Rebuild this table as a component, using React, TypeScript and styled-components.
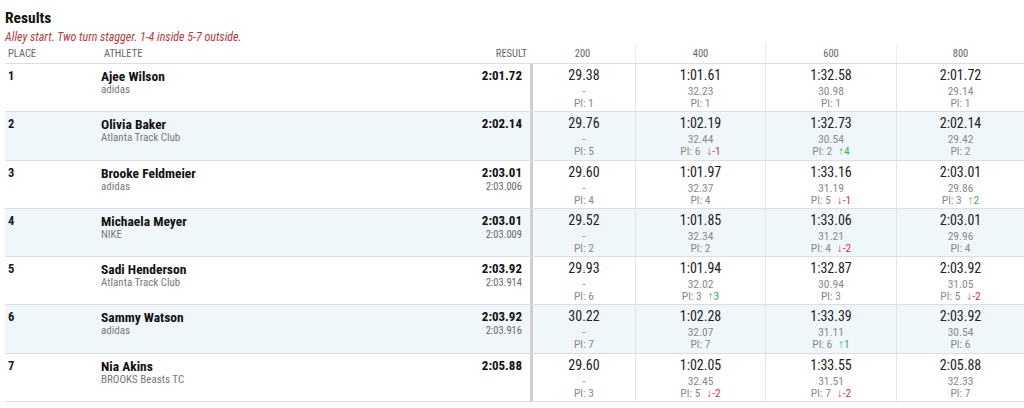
import React from "react";
import styled, { createGlobalStyle } from "styled-components";

type Change = { dir: "up" | "down"; value: number };

interface Split {
  time: string;
  lap: string;
  place: number;
  change?: Change;
}

interface Athlete {
  place: number;
  name: string;
  team: string;
  result: string;
  precise?: string;
  splits: Split[];
}

const SPLIT_LABELS = ["200", "400", "600", "800"];

const up = (value: number): Change => ({ dir: "up", value });
const down = (value: number): Change => ({ dir: "down", value });

const RESULTS: Athlete[] = [
  {
    place: 1,
    name: "Ajee Wilson",
    team: "adidas",
    result: "2:01.72",
    splits: [
      { time: "29.38", lap: "-", place: 1 },
      { time: "1:01.61", lap: "32.23", place: 1 },
      { time: "1:32.58", lap: "30.98", place: 1 },
      { time: "2:01.72", lap: "29.14", place: 1 },
    ],
  },
  {
    place: 2,
    name: "Olivia Baker",
    team: "Atlanta Track Club",
    result: "2:02.14",
    splits: [
      { time: "29.76", lap: "-", place: 5 },
      { time: "1:02.19", lap: "32.44", place: 6, change: down(1) },
      { time: "1:32.73", lap: "30.54", place: 2, change: up(4) },
      { time: "2:02.14", lap: "29.42", place: 2 },
    ],
  },
  {
    place: 3,
    name: "Brooke Feldmeier",
    team: "adidas",
    result: "2:03.01",
    precise: "2:03.006",
    splits: [
      { time: "29.60", lap: "-", place: 4 },
      { time: "1:01.97", lap: "32.37", place: 4 },
      { time: "1:33.16", lap: "31.19", place: 5, change: down(1) },
      { time: "2:03.01", lap: "29.86", place: 3, change: up(2) },
    ],
  },
  {
    place: 4,
    name: "Michaela Meyer",
    team: "NIKE",
    result: "2:03.01",
    precise: "2:03.009",
    splits: [
      { time: "29.52", lap: "-", place: 2 },
      { time: "1:01.85", lap: "32.34", place: 2 },
      { time: "1:33.06", lap: "31.21", place: 4, change: down(2) },
      { time: "2:03.01", lap: "29.96", place: 4 },
    ],
  },
  {
    place: 5,
    name: "Sadi Henderson",
    team: "Atlanta Track Club",
    result: "2:03.92",
    precise: "2:03.914",
    splits: [
      { time: "29.93", lap: "-", place: 6 },
      { time: "1:01.94", lap: "32.02", place: 3, change: up(3) },
      { time: "1:32.87", lap: "30.94", place: 3 },
      { time: "2:03.92", lap: "31.05", place: 5, change: down(2) },
    ],
  },
  {
    place: 6,
    name: "Sammy Watson",
    team: "adidas",
    result: "2:03.92",
    precise: "2:03.916",
    splits: [
      { time: "30.22", lap: "-", place: 7 },
      { time: "1:02.28", lap: "32.07", place: 7 },
      { time: "1:33.39", lap: "31.11", place: 6, change: up(1) },
      { time: "2:03.92", lap: "30.54", place: 6 },
    ],
  },
  {
    place: 7,
    name: "Nia Akins",
    team: "BROOKS Beasts TC",
    result: "2:05.88",
    splits: [
      { time: "29.60", lap: "-", place: 3 },
      { time: "1:02.05", lap: "32.45", place: 5, change: down(2) },
      { time: "1:33.55", lap: "31.51", place: 7, change: down(2) },
      { time: "2:05.88", lap: "32.33", place: 7 },
    ],
  },
];

const COLUMNS = "96px 1fr 97px 105px 130px 131px 128px";

const GlobalStyle = createGlobalStyle`
  html, body {
    margin: 0;
    padding: 0;
    background: #fff;
  }
  body {
    font-family: "Roboto Condensed", Roboto, "Liberation Sans", sans-serif;
    color: #1a1a1a;
  }
`;

const Page = styled.div`
  padding: 9px 0 0 5px;
`;

const Title = styled.h2`
  margin: 0;
  font-size: 15.5px;
  line-height: 19px;
  font-weight: 700;
  color: #111;
`;

const Note = styled.div`
  margin-top: 2px;
  font-size: 12px;
  line-height: 14px;
  font-style: italic;
  color: #b83a3c;
`;

const Table = styled.div`
  display: flex;
  flex-direction: column;
`;

const HeadRow = styled.div`
  display: grid;
  grid-template-columns: ${COLUMNS};
  border-bottom: 1px solid #dedede;
`;

const HeadCell = styled.div<{ $align?: "left" | "center" | "right"; $divider?: boolean }>`
  padding: 4px 3px 3px;
  font-size: 10.5px;
  line-height: 12px;
  text-transform: uppercase;
  color: #666;
  text-align: ${({ $align }) => $align ?? "left"};
  border-left: ${({ $divider }) => ($divider ? "1px solid #ececec" : "none")};
`;

const Row = styled.div<{ $shaded: boolean }>`
  display: grid;
  grid-template-columns: ${COLUMNS};
  height: 48.3px;
  box-sizing: border-box;
  border-bottom: 1px solid #dedede;
  background: ${({ $shaded }) => ($shaded ? "#f0f7fb" : "#fff")};
`;

const Place = styled.div`
  padding: 5px 3px 0;
  font-size: 12.5px;
  line-height: 14px;
  font-weight: 700;
`;

const AthleteCell = styled.div`
  padding-top: 5px;
  display: flex;
  flex-direction: column;
`;

const Name = styled.div`
  font-size: 13.5px;
  line-height: 14px;
  font-weight: 700;
  color: #111;
`;

const Team = styled.div`
  font-size: 11px;
  line-height: 13px;
  color: #777;
`;

const ResultCell = styled.div`
  padding: 5px 8px 0 0;
  display: flex;
  flex-direction: column;
  align-items: flex-end;
`;

const Mark = styled.div`
  font-size: 13px;
  line-height: 14px;
  font-weight: 700;
  color: #111;
`;

const Precise = styled.div`
  font-size: 10.5px;
  line-height: 13px;
  color: #666;
`;

const SplitCell = styled.div<{ $first: boolean }>`
  padding-top: 1px;
  display: flex;
  flex-direction: column;
  align-items: center;
  border-left: ${({ $first }) => ($first ? "3px solid #cfcfcf" : "1px solid #e3e3e3")};
`;

const SplitTime = styled.div`
  font-size: 14px;
  line-height: 20px;
  color: #222;
`;

const SplitMeta = styled.div`
  font-size: 11.5px;
  line-height: 12px;
  color: #8a8a8a;
`;

const SplitPlace = styled.div`
  display: flex;
  gap: 6px;
  font-size: 11.5px;
  line-height: 12px;
  color: #8a8a8a;
`;

const Delta = styled.span<{ $dir: "up" | "down" }>`
  color: ${({ $dir }) => ($dir === "up" ? "#3fae5a" : "#d2335c")};
`;

const SplitView: React.FC<{ split: Split; first: boolean }> = ({ split, first }) => (
  <SplitCell $first={first}>
    <SplitTime>{split.time}</SplitTime>
    <SplitMeta>{split.lap}</SplitMeta>
    <SplitPlace>
      <span>Pl: {split.place}</span>
      {split.change && (
        <Delta $dir={split.change.dir}>
          {split.change.dir === "up" ? `↑${split.change.value}` : `↓-${split.change.value}`}
        </Delta>
      )}
    </SplitPlace>
  </SplitCell>
);

export default function App() {
  return (
    <Page>
      <GlobalStyle />
      <Title>Results</Title>
      <Note>Alley start. Two turn stagger. 1-4 inside 5-7 outside.</Note>
      <Table>
        <HeadRow>
          <HeadCell>Place</HeadCell>
          <HeadCell>Athlete</HeadCell>
          <HeadCell $align="right">Result</HeadCell>
          {SPLIT_LABELS.map((label, i) => (
            <HeadCell key={label} $align="center" $divider={i > 0}>
              {label}
            </HeadCell>
          ))}
        </HeadRow>
        {RESULTS.map((a, idx) => (
          <Row key={a.place} $shaded={idx % 2 === 1}>
            <Place>{a.place}</Place>
            <AthleteCell>
              <Name>{a.name}</Name>
              <Team>{a.team}</Team>
            </AthleteCell>
            <ResultCell>
              <Mark>{a.result}</Mark>
              {a.precise && <Precise>{a.precise}</Precise>}
            </ResultCell>
            {a.splits.map((s, i) => (
              <SplitView key={i} split={s} first={i === 0} />
            ))}
          </Row>
        ))}
      </Table>
    </Page>
  );
}
